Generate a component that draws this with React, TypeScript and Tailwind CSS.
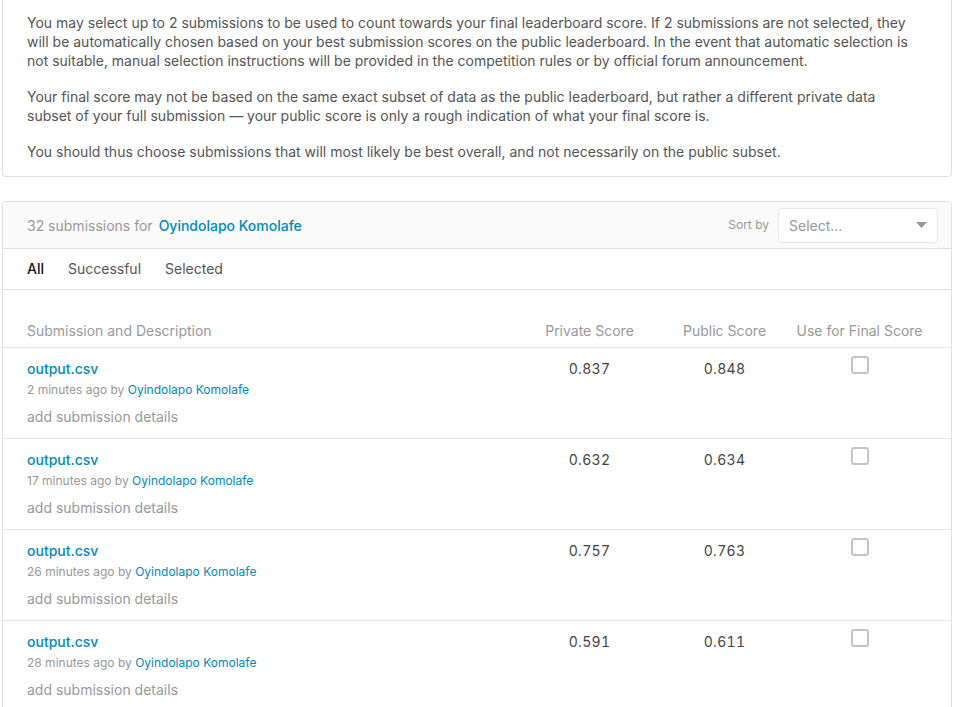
const rows = [
  { ago: '2 minutes ago', priv: '0.837', pub: '0.848' },
  { ago: '17 minutes ago', priv: '0.632', pub: '0.634' },
  { ago: '26 minutes ago', priv: '0.757', pub: '0.763' },
  { ago: '28 minutes ago', priv: '0.591', pub: '0.611' },
];

const App = () => {
  return (
    <div className="min-h-screen bg-white font-['Inter',sans-serif] text-[14px] text-[#555]">
      <div className="ml-[2px] w-[950px]">
        {/* selection info */}
        <div className="rounded-b border border-t-0 border-[#e0e0e0] pl-6 pr-[36px] pt-[13px] pb-[15px] leading-[19px]">
          <p>
            You may select up to 2 submissions to be used to count towards your final leaderboard score. If 2
            submissions are not selected, they will be automatically chosen based on your best submission scores on
            the public leaderboard. In the event that automatic selection is not suitable, manual selection
            instructions will be provided in the competition rules or by official forum announcement.
          </p>
          <p className="mt-[17px]">
            Your final score may not be based on the same exact subset of data as the public leaderboard, but rather a
            different private data subset of your full submission — your public score is only a rough indication of
            what your final score is.
          </p>
          <p className="mt-[17px]">
            You should thus choose submissions that will most likely be best overall, and not necessarily on the
            public subset.
          </p>
        </div>

        {/* submissions */}
        <div className="mt-6 rounded border border-[#e0e0e0]">
          <div className="flex h-[46px] items-center justify-between rounded-t bg-[#fafafa] pl-6 pr-[13px]">
            <div className="flex items-center gap-[6px]">
              <span className="text-[#999]">32 submissions for</span>
              <span className="font-medium text-[#008abc]">Oyindolapo Komolafe</span>
            </div>
            <div className="flex items-center gap-[9px]">
              <span className="text-[12px] text-[#999]">Sort by</span>
              <div className="flex h-[35px] w-[160px] items-center justify-between rounded border border-[#e6e6e6] bg-white pl-[10px] pr-[10px]">
                <span className="text-[#999]">Select...</span>
                <svg width="11" height="6" viewBox="0 0 11 6">
                  <path d="M0 0h11L5.5 6z" fill="#999" />
                </svg>
              </div>
            </div>
          </div>

          <div className="flex gap-6 border-y border-[#e0e0e0] px-6 pt-[10px] pb-[10px] leading-5">
            <span className="font-medium text-[#111]">All</span>
            <span>Successful</span>
            <span>Selected</span>
          </div>

          <div className="grid grid-cols-[1fr_135px_135px_135px] border-b border-[#e6e6e6] px-6 pt-[31px] pb-[6px] leading-5 text-[#999]">
            <span>Submission and Description</span>
            <span className="text-center">Private Score</span>
            <span className="text-center">Public Score</span>
            <span className="text-center">Use for Final Score</span>
          </div>

          {rows.map((r, i) => (
            <div
              key={i}
              className="grid grid-cols-[1fr_135px_135px_135px] border-b border-[#e6e6e6] px-6 pt-[11px] pb-[11px]"
            >
              <div className="flex flex-col">
                <span className="leading-5 font-medium text-[#008abc]">output.csv</span>
                <span className="mt-[2px] text-[12px] leading-[18px] text-[#999]">
                  {r.ago} by <span className="text-[#008abc]">Oyindolapo Komolafe</span>
                </span>
                <span className="mt-2 leading-5 text-[#999]">add submission details</span>
              </div>
              <span className="text-center leading-5 tabular-nums tracking-[0.3px] text-[#444]">{r.priv}</span>
              <span className="text-center leading-5 tabular-nums tracking-[0.3px] text-[#444]">{r.pub}</span>
              <div className="flex justify-center">
                <span className="-mt-[3px] block h-[18px] w-[18px] rounded-[3px] border-2 border-[#c4c4c4] bg-white" />
              </div>
            </div>
          ))}
        </div>
      </div>
    </div>
  );
};

export default App;
